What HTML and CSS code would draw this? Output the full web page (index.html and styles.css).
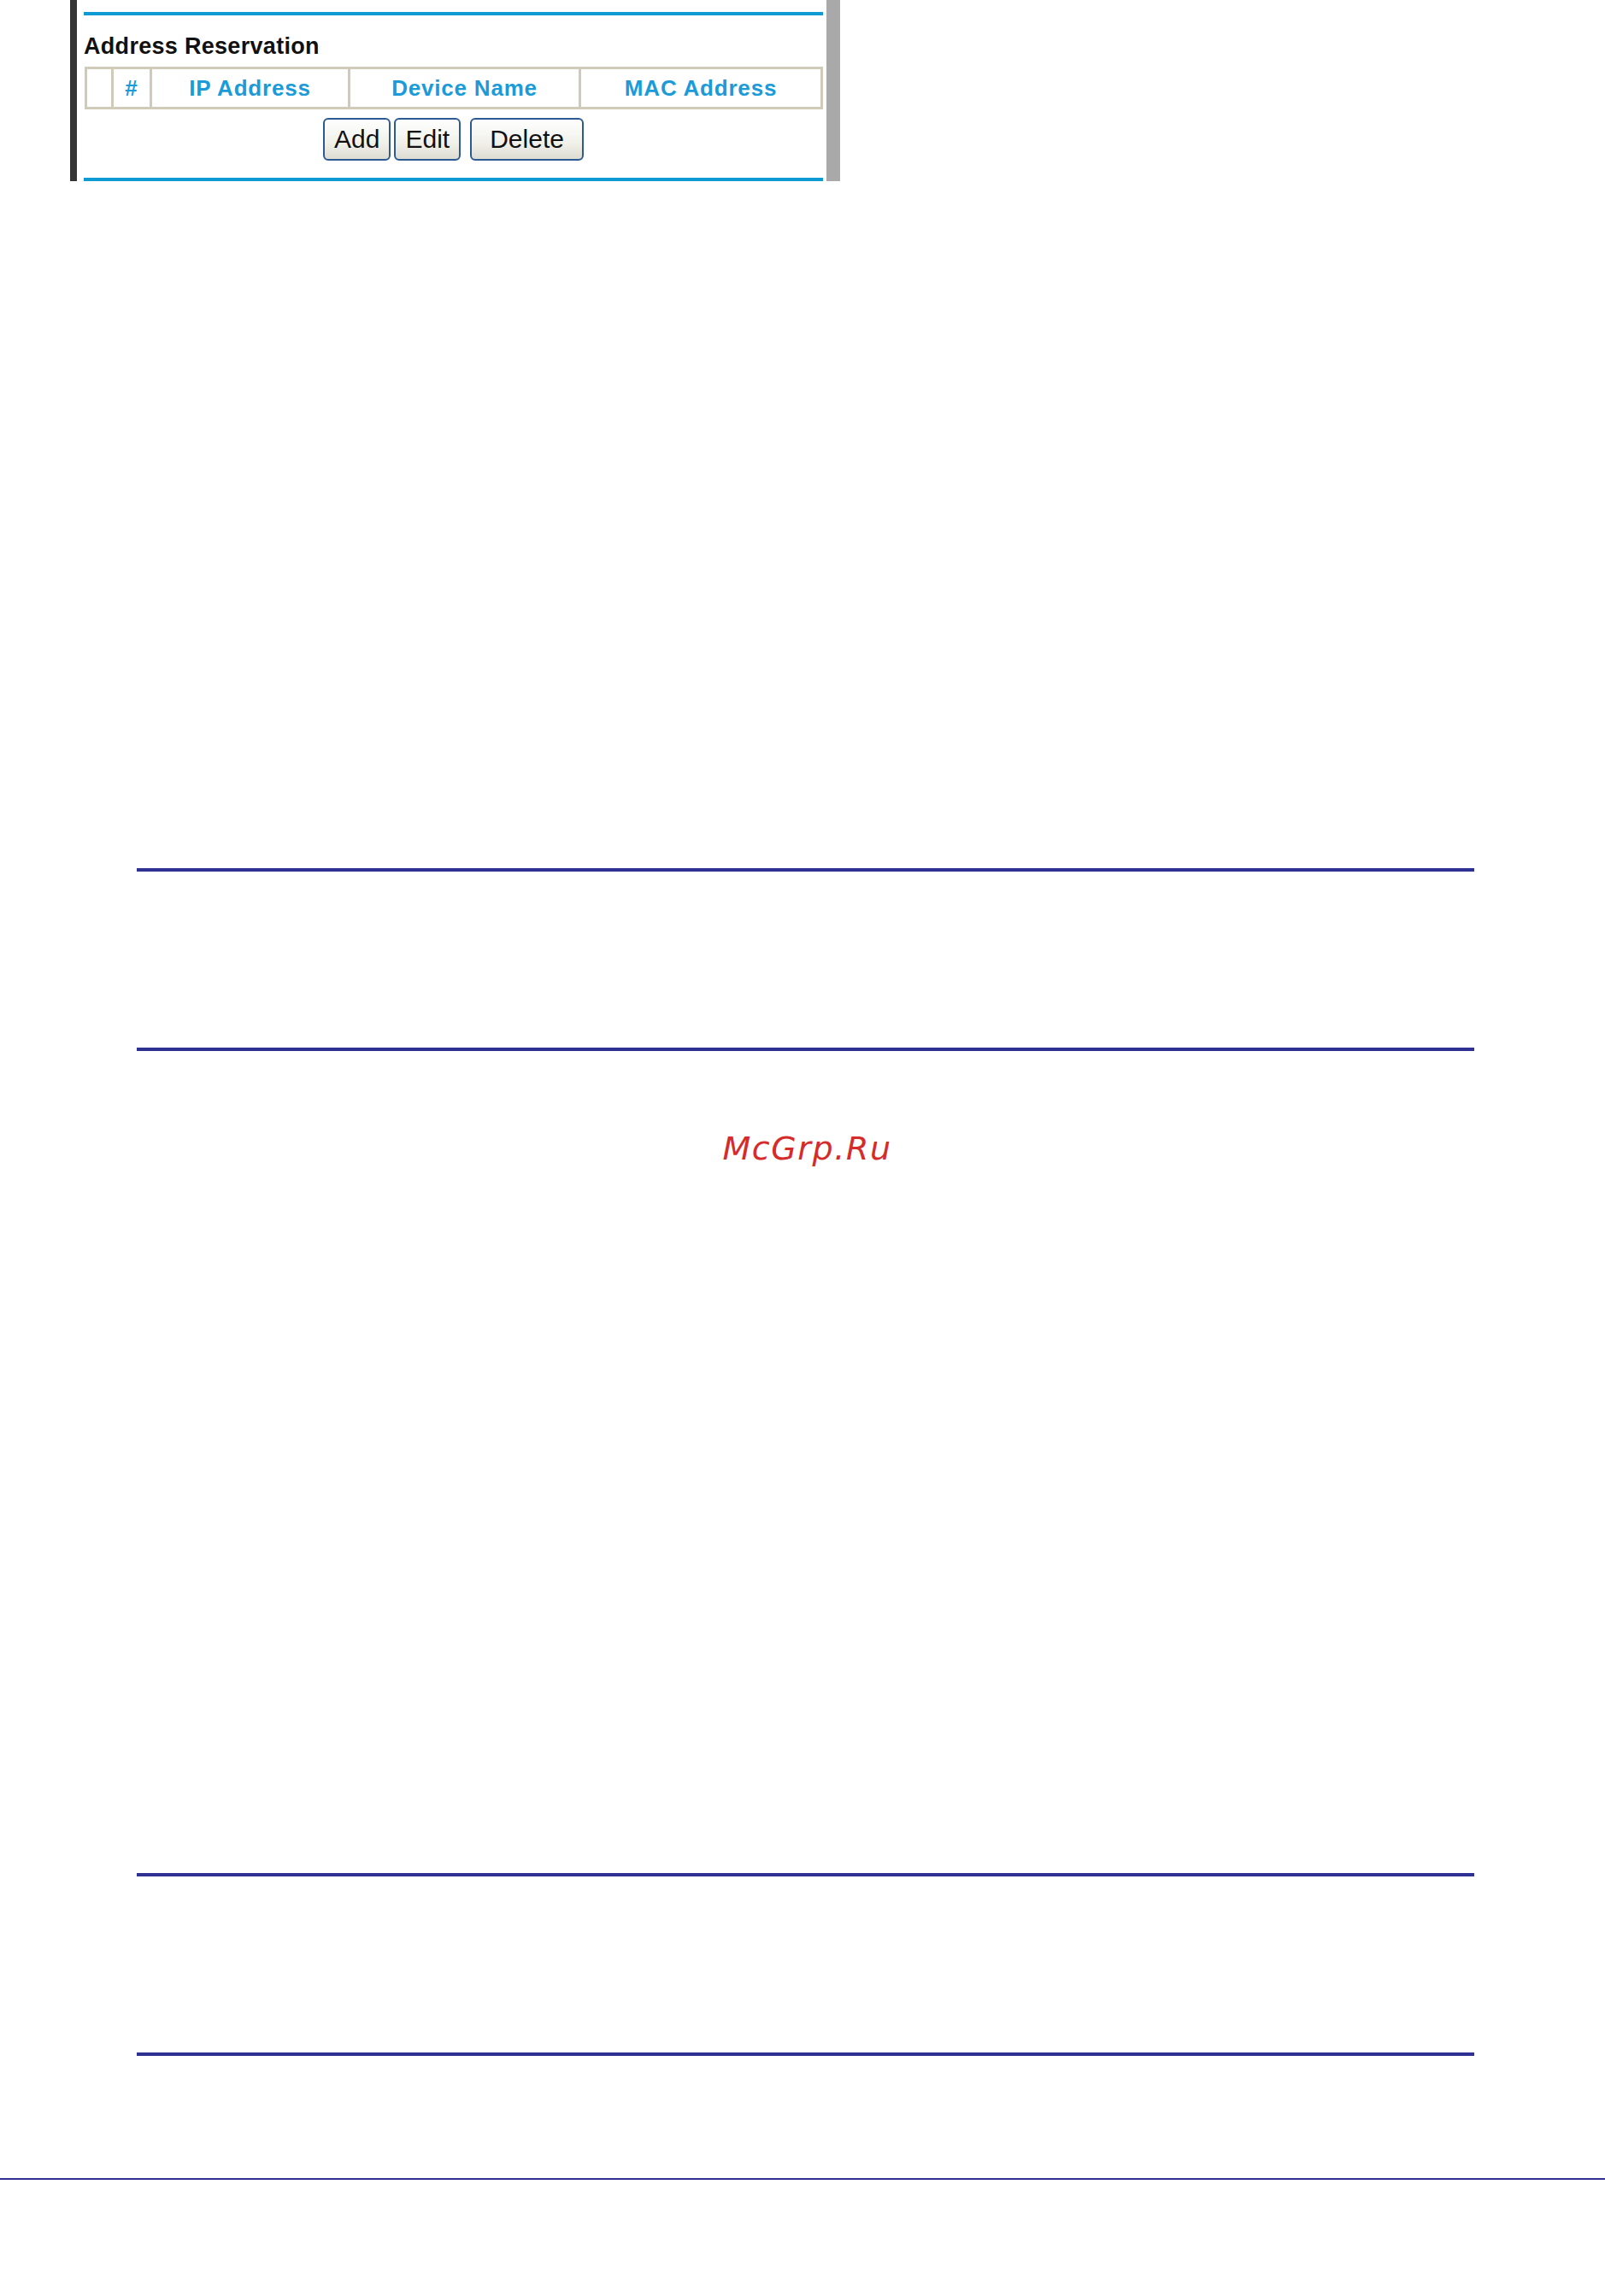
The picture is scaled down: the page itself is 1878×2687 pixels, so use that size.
FILE: index.html
```html
<!DOCTYPE html>
<html>
<head>
  <title>Address Reservation</title>
  <meta name="viewport" content="width=device-width, initial-scale=1">
  <link rel="stylesheet" href="styles.css">
</head>
<body>
  <div class="shot">
    <div class="shot-inner">
      <div class="blue-rule"></div>
      <div class="section-title">Address Reservation</div>
      <table class="reserve-table">
        <tr>
          <th class="col-check"></th>
          <th class="col-num">#</th>
          <th class="col-ip">IP Address</th>
          <th class="col-name">Device Name</th>
          <th class="col-mac">MAC Address</th>
        </tr>
      </table>
      <div class="button-row">
        <button class="btn">Add</button>
        <button class="btn">Edit</button>
        <button class="btn btn-wide">Delete</button>
      </div>
      <div class="blue-rule bottom"></div>
    </div>
  </div>

  <div class="ruled-box first"></div>
  <div class="mark">McGrp.Ru</div>
  <div class="ruled-box second"></div>

  <div class="page-line"></div>
</body>
</html>
```

FILE: styles.css
```css
body {
  margin: 0;
  background-color: white;
  font-family: "Liberation Sans", Arial, sans-serif;
}
.shot {
  width: 901px;
  height: 212px;
  margin-left: 82px;
  display: flex;
  overflow: hidden;
  border-left: 8px solid #353535;
  border-right: 16px solid #a9a9a9;
  box-sizing: border-box;
  background-color: white;
}
.shot-inner {
  flex: 1;
  padding: 14px 4px 0 8px;
}
.blue-rule {
  height: 4px;
  background-color: #0e9ad3;
}
.blue-rule.bottom {
  margin-top: 20px;
}
.section-title {
  margin-top: 20px;
  font-size: 27px;
  line-height: 32px;
  letter-spacing: 0.3px;
  font-weight: bold;
  color: #111;
}
.reserve-table {
  margin-top: 8px;
  margin-left: 1px;
  width: 864px;
  height: 50px;
  border-collapse: collapse;
  border: 3px solid #cfcbb8;
}
.reserve-table th {
  border: 3px solid #cfcbb8;
  padding: 0;
  font-size: 26px;
  letter-spacing: 0.8px;
  color: #1b9bd7;
  text-align: center;
}
.col-check { width: 28px; }
.col-num { width: 42px; }
.col-ip { width: 229px; }
.col-name { width: 267px; }
.button-row {
  display: flex;
  justify-content: center;
  margin-top: 10px;
}
.btn {
  height: 50px;
  padding: 0 11px;
  margin: 0 2px;
  border: 2px solid #2c5a92;
  border-radius: 6px;
  background: linear-gradient(#ffffff, #f1f1ea 60%, #dcdcd3);
  font-family: "Liberation Sans", Arial, sans-serif;
  font-size: 30px;
  color: #111;
}
.btn-wide {
  margin-left: 9px;
  padding: 0 21px;
}
.ruled-box {
  margin-left: 160px;
  width: 1565px;
  height: 206px;
  border-top: 4px solid #2e3192;
  border-bottom: 4px solid #2e3192;
}
.ruled-box.first {
  margin-top: 804px;
}
.mark {
  margin-left: 160px;
  width: 1565px;
  margin-top: 92px;
  margin-bottom: 826px;
  padding-left: 4px;
  box-sizing: border-box;
  text-align: center;
  font-family: "DejaVu Sans", sans-serif;
  font-style: italic;
  font-size: 38px;
  line-height: 44px;
  letter-spacing: 1.6px;
  color: #d62b2b;
}
.page-line {
  margin-top: 143px;
  height: 2px;
  background-color: #2e3192;
}
```
